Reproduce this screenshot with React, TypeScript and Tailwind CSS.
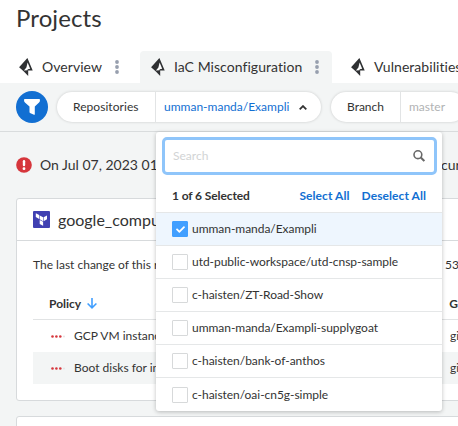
import React from 'react';
import { FaCheck } from 'react-icons/fa';

function PrismaIcon() {
  return (
    <svg className="h-[18px] w-[14px] shrink-0" viewBox="0 0 14 18">
      <path d="M8.4 0L13.7 12.4H9.2V18L4.6 13.2L0.1 9.2Z" fill="#2f3133" />
      <path d="M8.6 4.4L11.2 10.8L8.7 11.2L8.5 12.2L4.9 12.4L7.4 9.4Z" fill="white" />
    </svg>
  );
}

function Kebab() {
  return (
    <svg className="h-[14px] w-[4px] shrink-0" viewBox="0 0 4 14" fill="#979fae">
      <circle cx="2" cy="2" r="1.9" />
      <circle cx="2" cy="7" r="1.9" />
      <circle cx="2" cy="12" r="1.9" />
    </svg>
  );
}

function Tab({ label, active, className, textClass }: { label: string; active?: boolean; className: string; textClass: string }) {
  return (
    <div className={`flex h-8 shrink-0 items-center rounded-t ${active ? 'bg-[#f3f5f5]' : ''} ${className}`}>
      <PrismaIcon />
      <span className={`ml-[9px] whitespace-nowrap pb-[2px] text-[14px] tracking-[0.05px] ${textClass}`}>{label}</span>
      <Kebab />
    </div>
  );
}

const repositories = [
  'umman-manda/Exampli',
  'utd-public-workspace/utd-cnsp-sample',
  'c-haisten/ZT-Road-Show',
  'umman-manda/Exampli-supplygoat',
  'c-haisten/bank-of-anthos',
  'c-haisten/oai-cn5g-simple',
];

function RepositoryMenu() {
  return (
    <div className="absolute left-[99px] top-[40px] z-10 h-[279px] w-[286px] overflow-hidden rounded-[3px] bg-white shadow-[0_1px_4px_rgba(0,0,0,0.25)]">
      <div className="ml-[6px] mr-[5px] mt-[5px] flex h-[38px] items-center justify-between rounded-[5px] border-[3px] border-[#8fc5fa] pl-[8px] pr-[9px]">
        <span className="text-[12px] text-[#d2d4d5]">Search</span>
        <svg className="size-[12px]" viewBox="0 0 12 12" fill="none" stroke="#696969">
          <circle cx="4.9" cy="4.7" r="3.9" strokeWidth="1.6" />
          <path d="M7.8 7.6L11.3 11.1" strokeWidth="2.1" />
        </svg>
      </div>
      <div className="flex h-[37px] items-center pl-[16px] pr-[16px] pt-[5px] text-[12px] font-bold">
        <span className="tracking-[-0.1px] text-[#333]">1 of 6 Selected</span>
        <span className="ml-auto tracking-[0.07px] text-[#126fd2]">Select All</span>
        <span className="ml-[12px] tracking-[0.07px] text-[#126fd2]">Deselect All</span>
      </div>
      {repositories.map((name, i) => (
        <div
          key={name}
          className={`flex h-[33px] items-center border-t border-[#e5e7e8] pl-[16px] text-[12px] tracking-[-0.04px] text-[#333] last:h-[34px] ${i === 0 ? 'bg-[#eef6fe]' : ''}`}
        >
          <span
            className={`mr-[4px] flex size-[16px] items-center justify-center rounded-[1px] border ${
              i === 0 ? 'border-[#419fff] bg-[#419fff]' : 'border-[#d7d9da] bg-white'
            }`}
          >
            {i === 0 && <FaCheck className="size-[9px] text-white" />}
          </span>
          {name}
        </div>
      ))}
    </div>
  );
}

function Severity() {
  return (
    <svg className="h-[3px] w-[14px] shrink-0" viewBox="0 0 14 3">
      <circle cx="1.5" cy="1.5" r="1.3" fill="#d6363c" />
      <circle cx="5.4" cy="1.5" r="1.3" fill="#d6363c" />
      <circle cx="9.3" cy="1.5" r="1.3" fill="#d6363c" />
      <circle cx="13" cy="1.5" r="1" fill="#e3e5e6" />
    </svg>
  );
}

function PolicyRow({ title, shaded }: { title: string; shaded?: boolean }) {
  return (
    <div className={`flex h-8 items-center pl-[18px] text-[12px] ${shaded ? 'bg-[#f3f5f5]' : ''}`}>
      <Severity />
      <span className="ml-[9px] w-[376px] shrink-0">{title}</span>
      <span>git</span>
    </div>
  );
}

export default function App() {
  return (
    <div className="flex h-[426px] w-[458px] flex-col overflow-hidden bg-[#f3f5f5] font-['Lato',sans-serif] text-[#333]">
      <header className="h-[83px] shrink-0 bg-white">
        <h1 className="h-[51px] pl-[16px] pt-[4px] text-[24px] leading-[28px] tracking-[0.1px]">Projects</h1>
        <nav className="flex">
          <Tab label="Overview" className="w-[140px] pl-[19px]" textClass="w-[73px]" />
          <Tab label="IaC Misconfiguration" active className="w-[192px] pl-[11px]" textClass="w-[141px]" />
          <Tab label="Vulnerabilities" className="w-[190px] pl-[19px]" textClass="w-[110px]" />
        </nav>
      </header>

      <div className="flex h-[49px] shrink-0 items-center border-b border-[#d9dcdd] pl-[16px]">
        <button className="flex size-8 shrink-0 items-center justify-center rounded-full bg-[#126fd2]">
          <svg className="size-[16px]" viewBox="0 0 16 16" fill="white">
            <path d="M0.8 0H15.2Q16 0 16 0.9Q16 2.7 14.8 3.8L10.8 7.5V15.2Q10.8 16 10 15.7L6 13.9Q5.5 13.7 5.5 13V7.5L1.2 3.8Q0 2.7 0 0.9Q0 0 0.8 0Z" />
          </svg>
        </button>
        <div className="relative ml-[9px] flex h-[30px] w-[264px] shrink-0 items-center rounded-full bg-white text-[12px] shadow-[0_0_3px_rgba(0,0,0,0.18)]">
          <span className="w-[98px] pl-[16px] tracking-[0.05px]">Repositories</span>
          <span className="h-full w-px bg-[#e2e4e5]" />
          <span className="w-[143px] pl-[8px] text-[#126fd2]">umman-manda/Exampli</span>
          <svg className="h-[5px] w-[8px]" viewBox="0 0 8 5" fill="none" stroke="#333" strokeWidth="1.8">
            <path d="M0.7 4.3L4 1.1L7.3 4.3" />
          </svg>
          <RepositoryMenu />
        </div>
        <div className="ml-[10px] flex h-[30px] w-[135px] shrink-0 items-center rounded-full bg-white text-[12px] shadow-[0_0_3px_rgba(0,0,0,0.18)]">
          <span className="w-[69px] pl-[16px]">Branch</span>
          <span className="h-full w-px bg-[#e2e4e5]" />
          <span className="pl-[8px] text-[#b1b3b4]">master</span>
        </div>
      </div>

      <main className="shrink-0 pl-[16px]">
        <div className="flex h-[66px] items-center whitespace-nowrap text-[14px]">
          <svg className="size-[16px] shrink-0" viewBox="0 0 16 16">
            <circle cx="8" cy="8" r="7.8" fill="#d6363c" />
            <rect x="6.8" y="3" width="2.4" height="6.2" rx="1.2" fill="white" />
            <circle cx="8" cy="11.7" r="1.4" fill="white" />
          </svg>
          <span className="ml-[8px] w-[401px] shrink-0 pb-[2px]">On Jul 07, 2023 01</span>
          <span className="pb-[2px]">curred</span>
        </div>

        <section className="h-[203px] w-[500px] rounded-[3px] border border-[#d7dadc] bg-white">
          <div className="flex h-[42px] items-center border-b border-[#d7dadc] pl-[16px] text-[16px]">
            <svg className="size-[17px] shrink-0" viewBox="0 0 17 17">
              <rect width="17" height="17" rx="1" fill="#4040b2" />
              <g fill="white">
                <path d="M2.8 2.2L6.2 4.1V8L2.8 6.1Z" />
                <path d="M6.7 4.4L10.1 6.3V10.2L6.7 8.3Z" />
                <path d="M10.6 6.3L14 4.4V8.3L10.6 10.2Z" />
                <path d="M6.7 8.9L10.1 10.8V14.8L6.7 12.9Z" />
              </g>
            </svg>
            <span className="ml-[8px]">google_compute_instance</span>
          </div>
          <div className="flex h-[48px] items-center pl-[16px] text-[12px]">
            <span className="w-[412px] shrink-0">The last change of this resource was</span>
            <span>53</span>
          </div>
          <div className="ml-[16px]">
            <div className="flex h-[31px] items-center border-b border-[#e1e3e4] pb-[1px] pl-[16px] text-[12px] font-bold">
              <span>Policy</span>
              <svg className="ml-[6px] h-[11px] w-[10px]" viewBox="0 0 10 11" fill="none" stroke="#419fff" strokeWidth="1.6">
                <path d="M5 0V9.8M0.6 5.5L5 9.8L9.4 5.5" />
              </svg>
              <span className="ml-[352px]">Git</span>
            </div>
            <PolicyRow title="GCP VM instances" />
            <PolicyRow title="Boot disks for instances" shaded />
          </div>
        </section>

        <section className="mt-[15px] h-[100px] w-[500px] rounded-[3px] border border-[#d7dadc] bg-white" />
      </main>
    </div>
  );
}
